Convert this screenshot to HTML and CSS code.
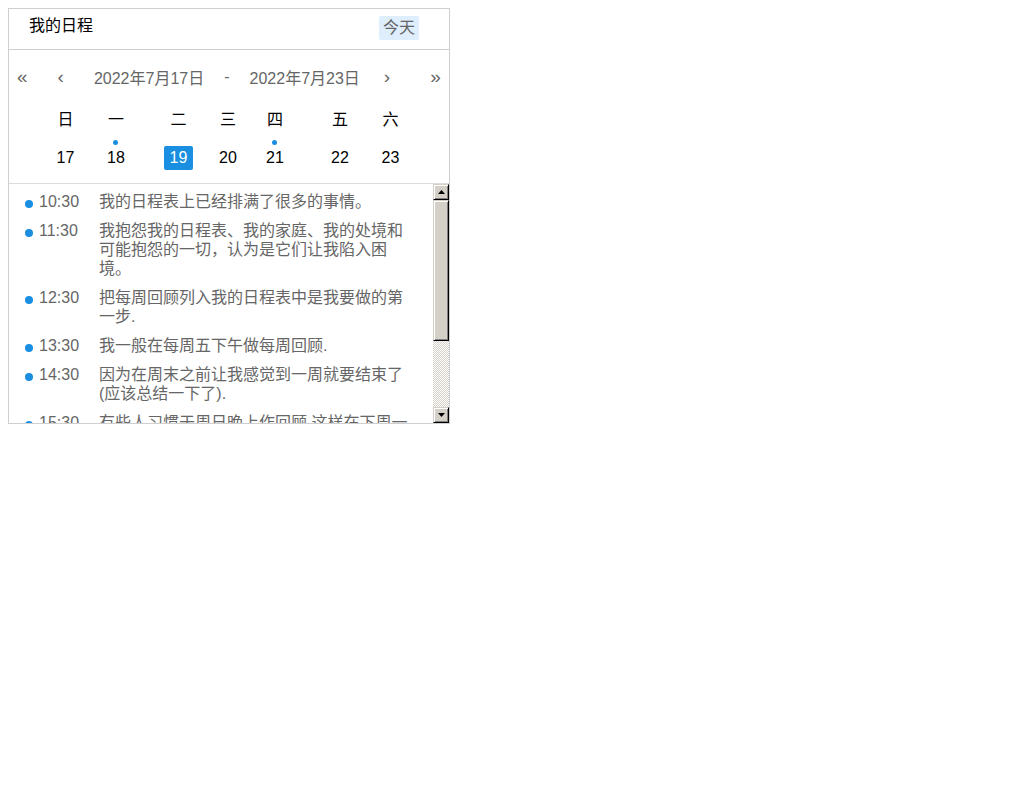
FILE: index.html
```html
<!DOCTYPE html>
<html lang="zh">
<head>
<meta charset="utf-8">
<title>我的日程</title>
<link rel="stylesheet" href="styles.css">
</head>
<body>
<div class="schedule">
  <div class="header">
    <div class="title">我的日程</div>
    <div class="today">今天</div>
  </div>
  <div class="calendar">
    <div class="nav">
      <span class="arr first">«</span>
      <span class="arr prev">‹</span>
      <span class="range start">2022年7月17日</span>
      <span class="dash">-</span>
      <span class="range end">2022年7月23日</span>
      <span class="arr next">›</span>
      <span class="arr last">»</span>
    </div>
    <div class="week heads">
      <span>日</span><span>一</span><span>二</span><span>三</span><span>四</span><span>五</span><span>六</span>
    </div>
    <div class="week days">
      <span class="day">17</span>
      <span class="day has">18</span>
      <span class="day sel">19</span>
      <span class="day">20</span>
      <span class="day has">21</span>
      <span class="day">22</span>
      <span class="day">23</span>
    </div>
  </div>
  <div class="list">
    <ul class="events">
      <li class="event"><span class="dot"></span><span class="time">10:30</span><span class="text">我的日程表上已经排满了很多的事情。</span></li>
      <li class="event"><span class="dot"></span><span class="time">11:30</span><span class="text">我抱怨我的日程表、我的家庭、我的处境和可能抱怨的一切，认为是它们让我陷入困境。</span></li>
      <li class="event"><span class="dot"></span><span class="time">12:30</span><span class="text">把每周回顾列入我的日程表中是我要做的第一步.</span></li>
      <li class="event"><span class="dot"></span><span class="time">13:30</span><span class="text">我一般在每周五下午做每周回顾.</span></li>
      <li class="event"><span class="dot"></span><span class="time">14:30</span><span class="text">因为在周末之前让我感觉到一周就要结束了(应该总结一下了).</span></li>
      <li class="event"><span class="dot"></span><span class="time">15:30</span><span class="text">有些人习惯于周日晚上作回顾,这样在下周一开始之前可以把事情理清楚.</span></li>
      <li class="event"><span class="dot"></span><span class="time">16:30</span><span class="text">每周回顾的时候我会检查所有的清单和项目,确保每一件事情都被记录下来,并且都安排好了下一步的行动.</span></li>
    </ul>
    <div class="scrollbar" aria-hidden="true">
      <div class="sb-btn up">
        <svg width="7" height="4" viewBox="0 0 7 4"><path d="M3.5 0L7 4H0z" fill="#000"/></svg>
      </div>
      <div class="sb-track"><div class="sb-thumb"></div></div>
      <div class="sb-btn down">
        <svg width="7" height="4" viewBox="0 0 7 4"><path d="M0 0H7L3.5 4z" fill="#000"/></svg>
      </div>
    </div>
  </div>
</div>
</body>
</html>
```
FILE: styles.css
```css
* { box-sizing: border-box; }
body {
  margin: 8px;
  font-family: "Liberation Sans", "Noto Sans CJK SC", sans-serif;
  font-size: 16px;
  color: #000;
  background: #fff;
}
.schedule {
  width: 442px;
  height: 416px;
  border: 1px solid #cfcfcf;
  display: flex;
  flex-direction: column;
}
.header {
  height: 41px;
  flex: none;
  border-bottom: 1px solid #cfcfcf;
  display: flex;
  justify-content: space-between;
  align-items: flex-start;
  padding: 7px 30px 0 20px;
}
.title {
  line-height: 20px;
}
.today {
  height: 24px;
  line-height: 24px;
  padding: 0 4px;
  color: #666;
  background: #deeefd;
  border-radius: 2px;
}
.calendar {
  flex: none;
  height: 134px;
  border-bottom: 1px solid #dcdcdc;
}
.nav {
  height: 54px;
  display: flex;
  align-items: center;
  padding-left: 8px;
  color: #666;
}
.arr { font-size: 19px; }
.prev { margin-left: 30px; }
.range.start { margin-left: 30px; }
.dash { margin-left: 20px; }
.range.end { margin-left: 20px; }
.next { margin-left: 24px; }
.last { margin-left: 40px; }
.week {
  display: grid;
  grid-template-columns: 51px 50px 75px 24px 70px 60px 41px;
  padding-left: 31px;
  justify-items: center;
}
.heads {
  height: 30px;
  align-items: center;
  padding-bottom: 2px;
}
.days {
  padding-top: 12px;
}
.day {
  position: relative;
  height: 24px;
  line-height: 24px;
  padding: 0 6px;
  border-radius: 2px;
}
.day.sel {
  background: #1a8ee0;
  color: #fff;
}
.day.has::before {
  content: "";
  position: absolute;
  left: 50%;
  top: -6px;
  width: 5px;
  height: 5px;
  margin-left: -2.5px;
  border-radius: 50%;
  background: #1a8ee0;
}
.list {
  flex: 1;
  min-height: 0;
  display: flex;
}
.events {
  flex: 1;
  list-style: none;
  margin: 0;
  padding: 8px 0 0 16px;
  overflow: hidden;
  color: #666;
}
.event {
  display: flex;
  align-items: flex-start;
  margin-bottom: 10px;
  line-height: 19px;
}
.dot {
  flex: none;
  width: 8px;
  height: 8px;
  margin-top: 8px;
  border-radius: 50%;
  background: #1a8ee0;
}
.time {
  flex: none;
  width: 40px;
  margin-left: 6px;
}
.text {
  width: 312px;
  margin-left: 20px;
}
.scrollbar {
  flex: none;
  width: 16px;
  display: flex;
  flex-direction: column;
}
.sb-btn,
.sb-thumb {
  background: #d4d0c8;
  border: 1px solid;
  border-color: #d4d0c8 #000 #000 #d4d0c8;
  box-shadow: inset 1px 1px #fff, inset -1px -1px #808080;
}
.sb-btn {
  height: 16px;
  flex: none;
  display: flex;
  align-items: center;
  justify-content: center;
}
.sb-btn svg { display: block; }
.sb-track {
  flex: 1;
  background-color: #fff;
  background-image: url("data:image/svg+xml;utf8,<svg xmlns='http://www.w3.org/2000/svg' width='2' height='2' shape-rendering='crispEdges'><rect width='1' height='1' fill='rgb(212,208,200)'/><rect x='1' y='1' width='1' height='1' fill='rgb(212,208,200)'/></svg>");
  background-size: 2px 2px;
}
.sb-thumb {
  height: 141px;
}
```
